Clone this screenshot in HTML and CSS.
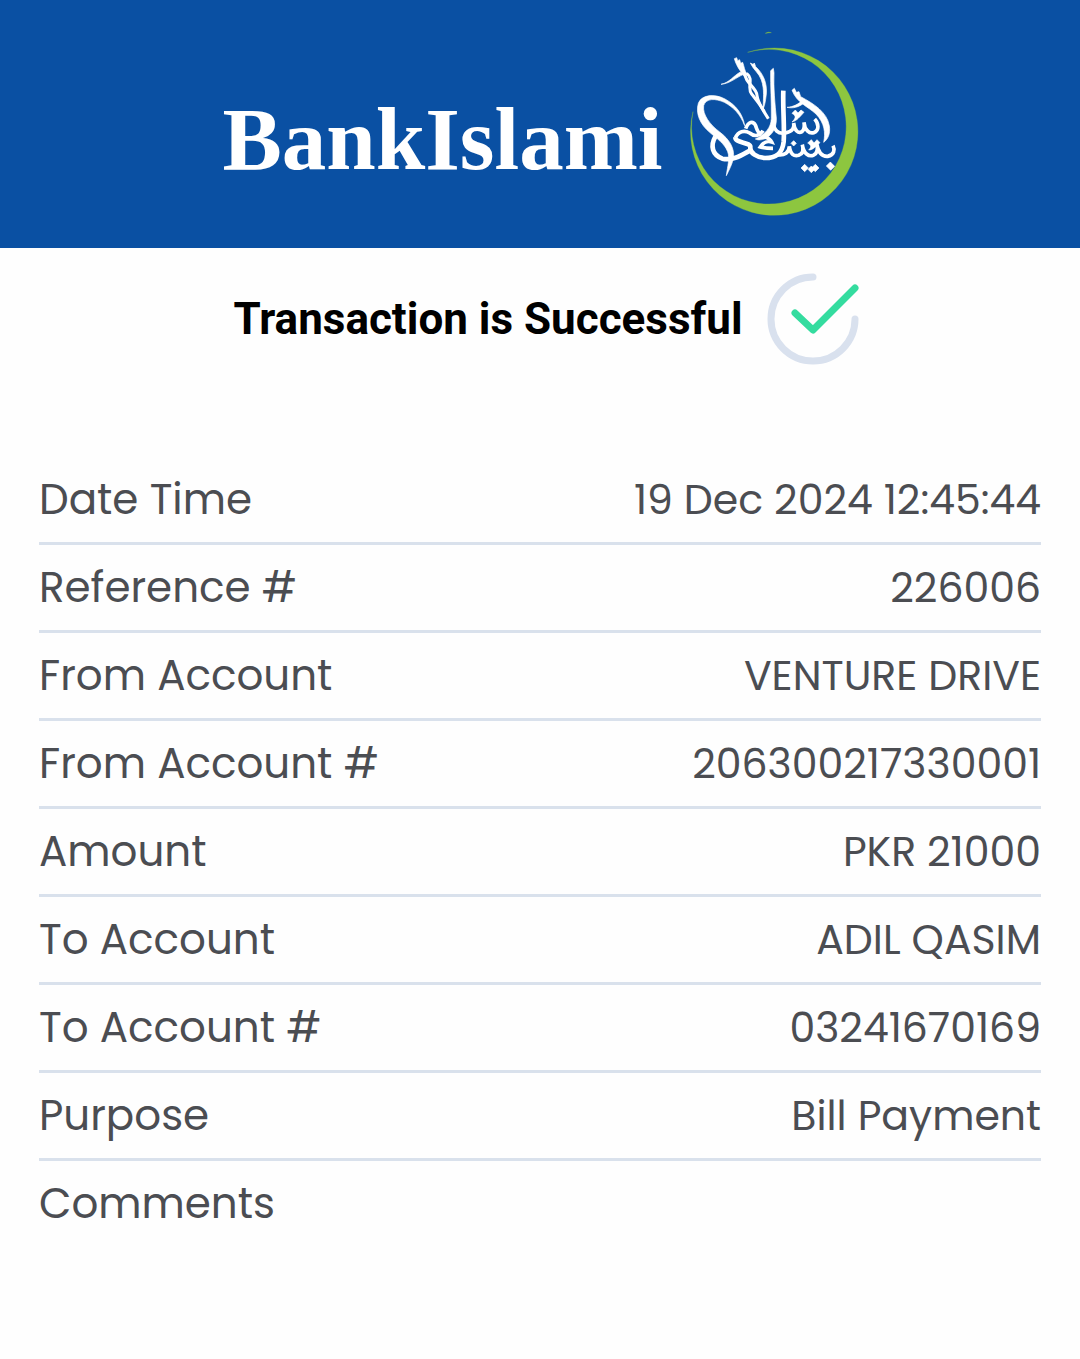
FILE: index.html
```html
<!DOCTYPE html>
<html lang="en">
<head>
<meta charset="utf-8">
<meta name="viewport" content="width=device-width, initial-scale=1">
<title>BankIslami – Transaction receipt</title>
<link rel="stylesheet" href="styles.css">
</head>
<body>
<header class="brand">
  <span class="wordmark">BankIslami</span>
  <svg class="emblem" viewBox="0 0 570 615" aria-hidden="true">
    <path class="crescent" d="M200 97A251 251 0 1 1 36 275A232 232 0 1 0 200 97Z"/>
    <path class="crescent" d="M253 40Q262 34 271 38Q262 38 253 40Z"/>
    <g class="ink">
      <!-- sweeping loop on the left -->
      <path d="M191 317C178 283 158 262 130 247C103 235 75 234 68 257C64 284 87 314 116 336C145 358 162 385 157 415C153 435 144 450 136 467C140 437 147 415 140 395C130 370 109 357 86 337C57 313 43 280 52 250C61 224 101 220 132 237C165 255 186 283 191 317Z"/>
      <path class="pen" d="M103 350C87 378 94 405 124 416C156 423 182 405 208 391"/>
      <path class="pen" d="M163 352C162 370 210 366 208 382C206 399 228 413 252 414C284 414 304 402 308 365C311 320 305 264 307 212"/>
      <path class="fine" d="M163 354C172 333 190 330 206 339C222 352 237 347 246 332"/>
      <path class="fine" d="M194 326C202 304 216 302 223 315C228 326 228 338 240 342"/>
      <!-- braided uprights -->
      <path d="M160 116L167 113L170 122L176 119L179 130L185 127C190 140 190 152 198 162L190 170C180 154 168 143 160 116Z"/>
      <path class="strand" d="M192 158C190 190 226 200 228 226C231 250 245 268 262 296"/>
      <path class="strand" d="M197 160C220 178 196 202 212 222C226 240 240 256 250 276"/>
      <path d="M120 193C145 188 158 167 178 156L188 163C164 173 149 190 120 193Z"/>
      <path d="M208 129L216 133L220 129L224 140C247 161 259 190 256 222C253 248 250 260 246 267C247 238 251 208 241 180C234 159 218 151 208 129Z"/>
      <path d="M269 152L277 145L279 158C277 203 282 253 286 294C287 318 279 337 260 352C247 360 232 362 223 357C253 343 270 323 271 296C272 249 268 199 269 152Z"/>
      <path d="M333 211L340 205L346 217L354 215L359 230C398 251 438 276 445 317C449 342 440 358 428 367C434 339 431 309 405 282C380 259 348 249 333 211Z"/>
      <path d="M318 262C337 261 352 252 365 241L369 249C353 262 335 266 318 262Z"/>
      <path d="M333 280L343 270L351 279L360 270L369 277C358 288 348 303 333 306C345 294 346 288 333 280Z"/>
      <!-- middle line -->
      <path class="fine" d="M276 300C277 333 293 343 313 339C334 334 341 325 338 309C340 331 352 342 363 335C371 328 371 318 369 307C371 330 385 342 398 338C417 331 412 309 401 297"/>
      <!-- lower line -->
      <path class="fine" d="M249 350C260 353 268 357 272 366C260 362 248 366 238 381C252 385 265 385 276 385"/>
      <path class="fine" d="M288 404C311 408 325 397 325 379C328 403 339 410 353 406C367 401 368 388 364 374C368 401 383 411 397 406C410 401 411 388 407 371C412 398 425 410 440 409C460 405 462 389 456 377"/>
      <path d="M380 369L391 359L399 369L408 359L417 368C403 379 397 390 383 390C392 381 391 376 380 369Z"/>
      <path d="M330 370L338 362L346 370L338 378Z"/>
      <!-- dots -->
      <path d="M360 444L371 433L382 444L371 455ZM381 448L391 438L401 448L391 458ZM392 444L403 433L414 444L403 455ZM436 438L448 426L461 439L449 451Z"/>
    </g>
  </svg>
</header>
<main class="receipt">
  <div class="status">
    <h1 class="status-text">Transaction is Successful</h1>
    <svg class="status-icon" viewBox="0 0 92 92" aria-hidden="true">
      <path class="ring" d="M46 4A42 42 0 1 0 88 46"/>
      <path class="tick" d="M28 40L46 57L88 15"/>
    </svg>
  </div>
  <table class="details">
    <tbody>
      <tr><th scope="row">Date Time</th><td>19 Dec 2024 12:45:44</td></tr>
      <tr><th scope="row">Reference #</th><td>226006</td></tr>
      <tr><th scope="row">From Account</th><td>VENTURE DRIVE</td></tr>
      <tr><th scope="row">From Account #</th><td>206300217330001</td></tr>
      <tr><th scope="row">Amount</th><td>PKR 21000</td></tr>
      <tr><th scope="row">To Account</th><td>ADIL QASIM</td></tr>
      <tr><th scope="row">To Account #</th><td>03241670169</td></tr>
      <tr><th scope="row">Purpose</th><td>Bill Payment</td></tr>
      <tr><th scope="row">Comments</th><td></td></tr>
    </tbody>
  </table>
</main>
</body>
</html>
```
FILE: styles.css
```css
* { box-sizing: border-box; }

body {
  margin: 0;
  background: #fefefe;
  color: #4b4d52;
  font-family: Poppins, Inter, "Liberation Sans", sans-serif;
}

.brand {
  display: flex;
  justify-content: center;
  align-items: center;
  gap: 18px;
  padding: 20px 0 23px 13px;
  background: #0a50a3;
}

.wordmark {
  padding-top: 32px;
  color: #fff;
  font-family: "Palatino Linotype", Palatino, "Liberation Serif", serif;
  font-size: 89px;
  font-weight: 700;
  line-height: 96px;
}

.emblem { display: block; width: 190px; height: 205px; }
.crescent { fill: #8dc63f; stroke: #8dc63f; stroke-width: 1; }
.ink { fill: #fff; stroke: #fff; stroke-width: 2; }
.pen { fill: none; stroke-width: 14; }
.fine { fill: none; stroke-width: 11; }
.strand { fill: none; stroke-width: 9; }

.receipt { padding: 25px 39px 60px; }

.status {
  display: flex;
  justify-content: center;
  align-items: center;
  gap: 24px;
  margin-bottom: 92px;
  padding-left: 12px;
}

.status-text {
  margin: 0;
  color: #000;
  font-family: Roboto, sans-serif;
  font-size: 44px;
  font-weight: 700;
  line-height: 52px;
}

.status-icon { width: 92px; height: 92px; fill: none; stroke-linecap: round; stroke-linejoin: round; }
.ring { stroke: #d9e1ee; stroke-width: 7; }
.tick { stroke: #34dc9f; stroke-width: 7; }

.details { width: 100%; border-collapse: separate; border-spacing: 0; }

.details th,
.details td {
  height: 88px;
  padding: 0;
  border-bottom: 3px solid #d9e1ec;
  font-size: 42px;
  font-weight: 400;
  line-height: 52px;
  text-align: left;
  white-space: nowrap;
}

.details td { font-size: 41px; text-align: right; }

.details tr:last-child th,
.details tr:last-child td { border-bottom-color: transparent; }
```
